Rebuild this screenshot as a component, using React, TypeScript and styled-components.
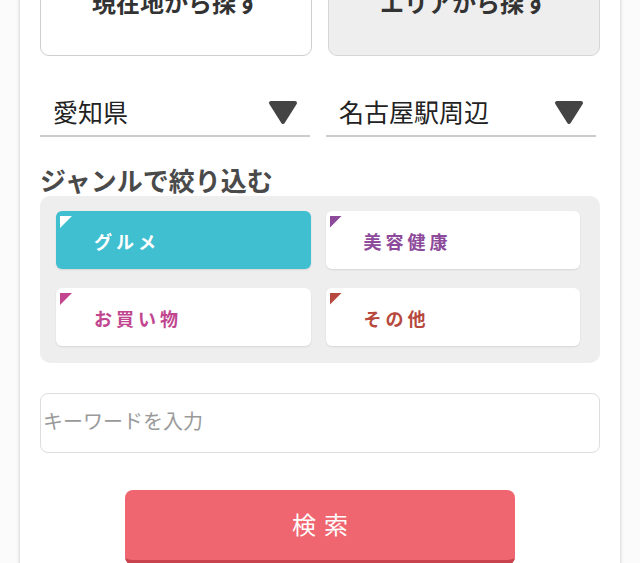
import React from "react";
import styled, { createGlobalStyle } from "styled-components";

const Global = createGlobalStyle`
  html, body { margin: 0; padding: 0; background: #ffffff; }
  body { font-family: "Noto Sans CJK JP", "Noto Sans", sans-serif; overflow: hidden; }
  * { box-sizing: border-box; }
`;

const Page = styled.div`
  width: 640px;
  height: 563px;
  overflow: hidden;
  background: #fbfbfb;
`;

const Card = styled.div`
  margin: -50px 20px 0;
  width: 600px;
  background: #ffffff;
  box-shadow: 0 0 4px rgba(0, 0, 0, 0.22);
  padding: 0 20px 20px;
`;

const TopRow = styled.div`
  display: grid;
  grid-template-columns: 1fr 1fr;
  gap: 16px;
`;

const ModeButton = styled.button<{ $active?: boolean }>`
  height: 106px;
  border-radius: 9px;
  border: 1.5px solid ${(p) => (p.$active ? "#d6d6d6" : "#cfcfcf")};
  background: ${(p) => (p.$active ? "#eeeeee" : "#ffffff")};
  font-family: inherit;
  font-size: 24px;
  font-weight: 700;
  color: #333333;
  display: flex;
  align-items: center;
  justify-content: center;
  padding: 0 0 4px;
`;

const SelectRow = styled.div`
  display: grid;
  grid-template-columns: 270px 270px;
  gap: 16px;
  margin-top: 39px;
`;

const Select = styled.div`
  height: 42px;
  border-bottom: 2px solid #cccccc;
  display: flex;
  align-items: center;
  justify-content: space-between;
  padding: 0 12px 5px 13px;
  font-size: 25px;
  color: #222222;
`;

const SelectLabel = styled.span`
  line-height: 1;
  margin-bottom: 2px;
`;

const Heading = styled.h2`
  margin: 28px 0 1px;
  font-size: 26px;
  line-height: 30px;
  font-weight: 700;
  color: #4a4a4a;
`;

const GenrePanel = styled.div`
  background: #eeeeee;
  border-radius: 10px;
  padding: 15px 20px 17px 16px;
  display: grid;
  grid-template-columns: 1fr 1fr;
  gap: 19px 15px;
`;

const GenreButton = styled.div<{ $color: string; $active?: boolean }>`
  position: relative;
  height: 58px;
  border-radius: 6px;
  background: ${(p) => (p.$active ? p.$color : "#ffffff")};
  color: ${(p) => (p.$active ? "#ffffff" : p.$color)};
  box-shadow: 0 1px 2px rgba(0, 0, 0, 0.1);
  display: flex;
  align-items: center;
  padding: 2px 0 0 38px;
  font-size: 18px;
  font-weight: 700;
  letter-spacing: 4px;
`;

const Corner = styled.span<{ $color: string }>`
  position: absolute;
  left: 4px;
  top: 5px;
  width: 12px;
  height: 12px;
  background: ${(p) => p.$color};
  clip-path: polygon(0 0, 100% 0, 0 100%);
`;

const Keyword = styled.input`
  display: block;
  width: 100%;
  height: 60px;
  margin-top: 30px;
  border: 1.5px solid #dddddd;
  border-radius: 8px;
  padding: 0 2px 5px;
  font-family: inherit;
  font-size: 20px;
  color: #333;
  outline: none;
  &::placeholder { color: #9a9a9a; }
`;

const SearchButton = styled.button`
  display: block;
  margin: 37px auto 0;
  width: 390px;
  height: 75px;
  border: none;
  border-bottom: 5px solid #c9434e;
  border-radius: 8px;
  background: #ef6570;
  color: #ffffff;
  font-family: inherit;
  font-size: 24px;
  letter-spacing: 8px;
  text-indent: 8px;
  padding: 0 0 4px;
`;

const Arrow = () => (
  <svg width="30" height="25" viewBox="0 0 30 25">
    <polygon
      points="3,3 27,3 15,22"
      fill="#444444"
      stroke="#444444"
      strokeWidth="4"
      strokeLinejoin="round"
    />
  </svg>
);

const genres = [
  { label: "グルメ", color: "#3fbfd0", active: true },
  { label: "美容健康", color: "#8d4a9b" },
  { label: "お買い物", color: "#c1468f" },
  { label: "その他", color: "#b6483d" },
];

export default function App() {
  return (
    <Page>
      <Global />
      <Card>
        <TopRow>
          <ModeButton>現在地から探す</ModeButton>
          <ModeButton $active>エリアから探す</ModeButton>
        </TopRow>
        <SelectRow>
          <Select>
            <SelectLabel>愛知県</SelectLabel>
            <Arrow />
          </Select>
          <Select>
            <SelectLabel>名古屋駅周辺</SelectLabel>
            <Arrow />
          </Select>
        </SelectRow>
        <Heading>ジャンルで絞り込む</Heading>
        <GenrePanel>
          {genres.map((g) => (
            <GenreButton key={g.label} $color={g.color} $active={g.active}>
              <Corner $color={g.active ? "#ffffff" : g.color} />
              {g.label}
            </GenreButton>
          ))}
        </GenrePanel>
        <Keyword placeholder="キーワードを入力" />
        <SearchButton>検索</SearchButton>
      </Card>
    </Page>
  );
}
